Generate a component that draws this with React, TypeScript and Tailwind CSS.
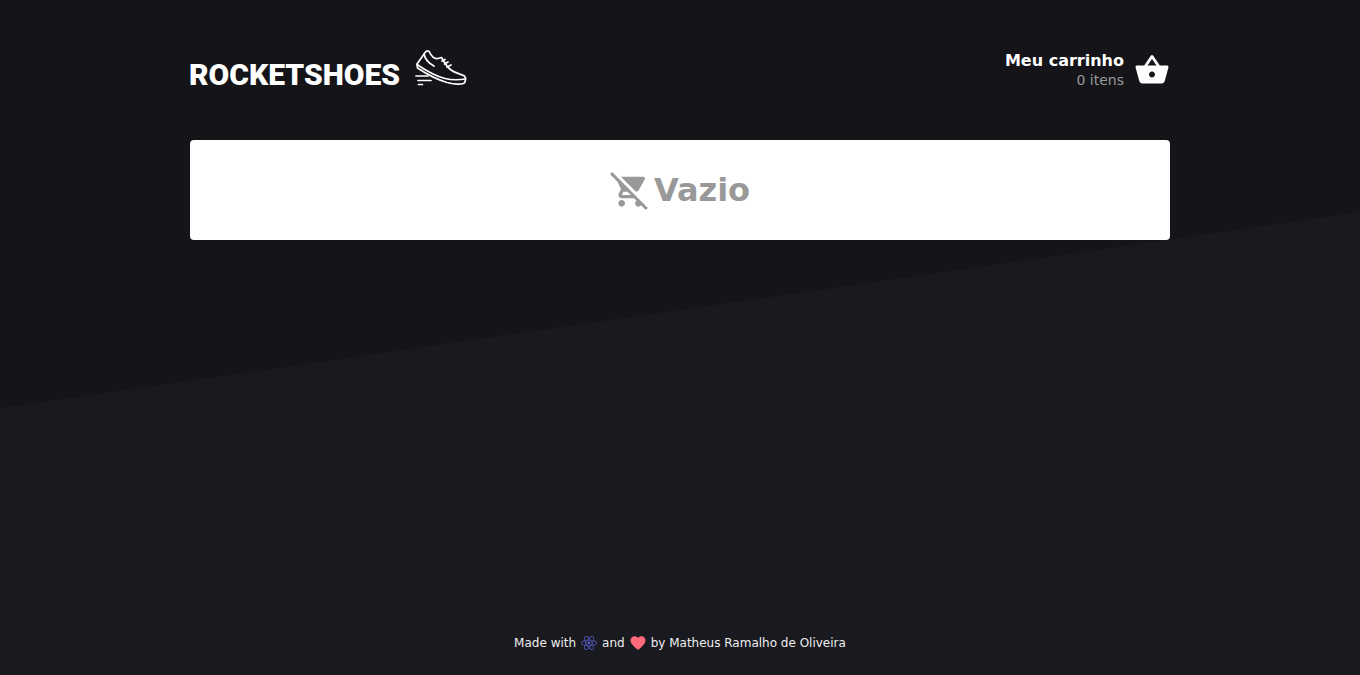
import { MdShoppingBasket, MdRemoveShoppingCart, MdFavorite } from 'react-icons/md'
import { FaReact } from 'react-icons/fa'

function ShoeLogo() {
  return (
    <svg width="52" height="38" viewBox="0 0 52 38" fill="none" stroke="white" strokeWidth="1.7" strokeLinejoin="round" strokeLinecap="round">
      <path d="M2 14 L10.500 2 C11.500 0.500 13.500 0.500 14.500 2 C16 5.500 19 9 23 8.500 L26.500 7.500 C29 12 32 17 36 20 C40 23 46 24 49.500 26 C51 28 51 32 48.500 33.500 C44 34.500 38 34 32 32.500 C22 29.500 10 23 2.500 18 Z" />
      <path d="M2 14.500 C10 20 20 26 30 28.500 C36 30 44 30 50.500 29" />
      <path d="M9 4 C10 9 13 13 19 16" />
      <path d="M27 11 L30 9.500 M29.500 14 L33 12 M32 17 L36 15" />
      <path d="M1 26 H13 M3 30.500 H16 M3.500 34.500 H7.500" />
    </svg>
  )
}

export default function App() {
  return (
    <div className="relative min-h-[675px] overflow-hidden bg-[#141419] font-['DejaVu_Sans',sans-serif] text-white">
      <div className="absolute inset-0 bg-[#191920] [clip-path:polygon(0_408px,100%_212px,100%_100%,0_100%)]" />
      <div className="relative mx-auto flex min-h-[675px] w-[980px] flex-col">
        <header className="flex h-[140px] items-start justify-between pt-[50px]">
          <div className="flex items-start gap-[15px]">
            <span className="ml-[-1px] mt-[10px] font-['Roboto',sans-serif] text-[30px] font-black leading-[30px]">ROCKETSHOES</span>
            <ShoeLogo />
          </div>
          <div className="flex items-center gap-[10px]">
            <div className="text-right">
              <div className="text-[16px] font-bold leading-[21px]">Meu carrinho</div>
              <div className="text-[14px] leading-[19px] text-[#999]">0 itens</div>
            </div>
            <MdShoppingBasket size={36} color="#fff" />
          </div>
        </header>
        <main className="flex h-[100px] items-center justify-center rounded bg-white text-[#999]">
          <MdRemoveShoppingCart size={40} />
          <span className="ml-[4px] text-[32px] font-bold">Vazio</span>
        </main>
        <footer className="mt-auto flex h-[42px] items-start justify-center gap-[5px] text-[12px] leading-[20px] text-[#eee]">
          <span>Made with</span>
          <FaReact size={16} color="#5a5fd0" className="mt-[2px]" />
          <span>and</span>
          <MdFavorite size={18} color="#ff6b7a" className="mx-[-1px] mt-[1px]" />
          <span>by Matheus Ramalho de Oliveira</span>
        </footer>
      </div>
    </div>
  )
}
